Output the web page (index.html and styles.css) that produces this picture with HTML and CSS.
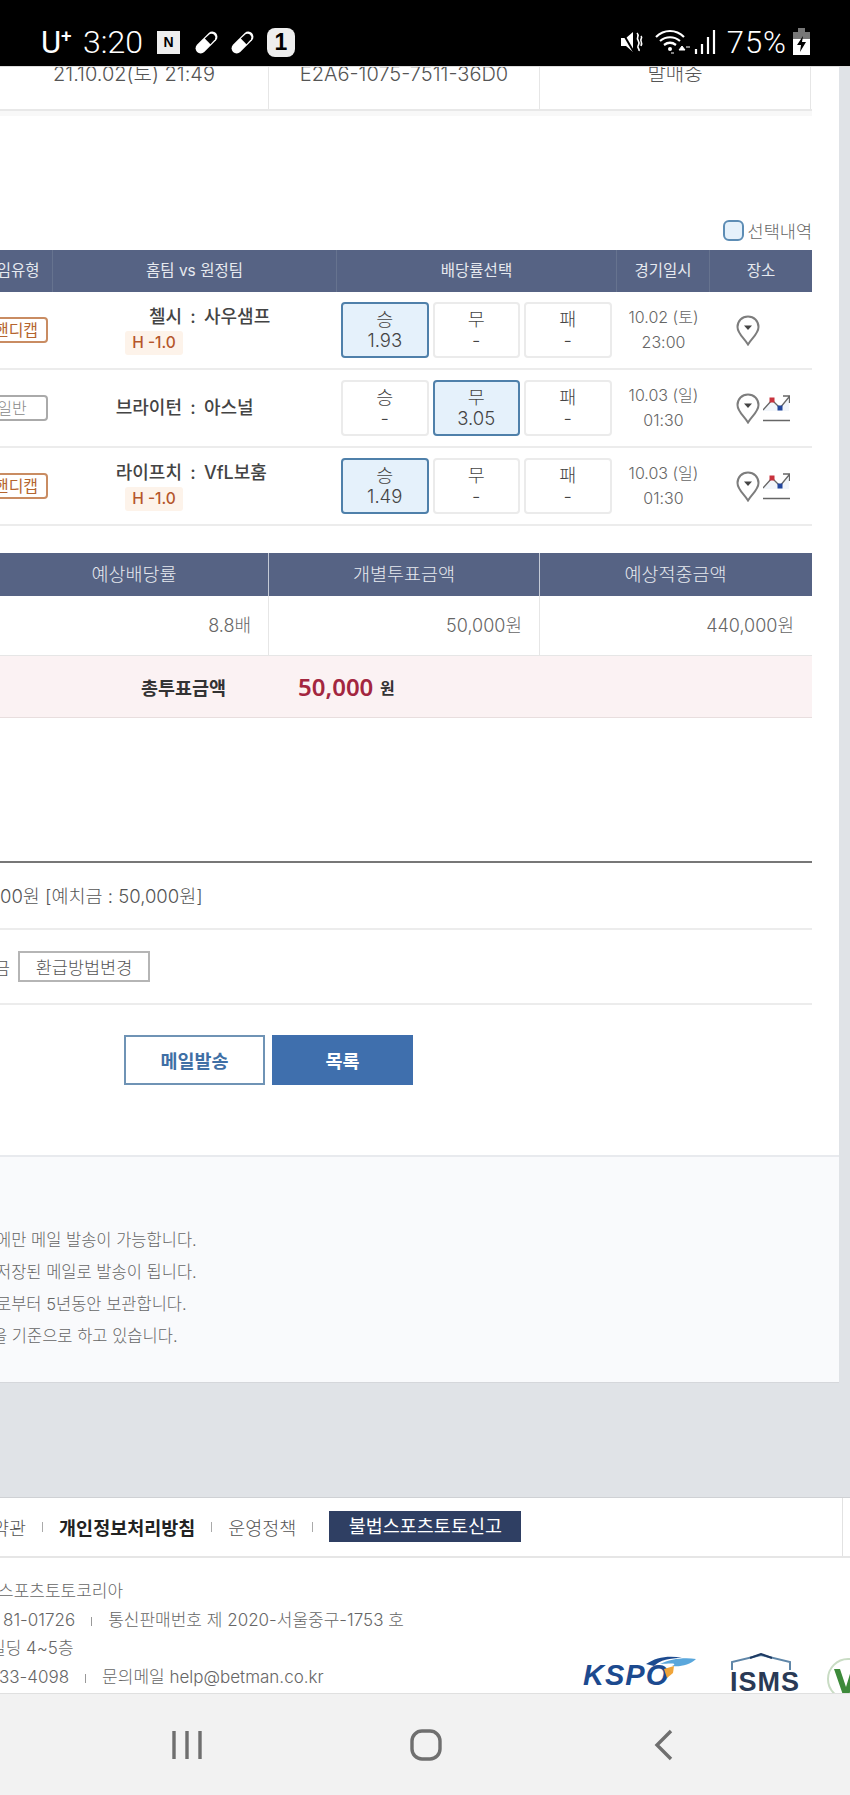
FILE: index.html
```html
<!DOCTYPE html>
<html lang="ko">
<head>
    <meta charset="UTF-8">
    <title>구매내역</title>
    <link rel="stylesheet" href="styles.css">
</head>
<body>
    <svg class="defs" width="0" height="0">
        <symbol id="pin" viewBox="0 0 24 31">
            <path d="M12 1.500C6 1.500 1.500 6 1.500 12c0 6.500 6.500 11 10.500 17.500C16 23 22.500 18.500 22.500 12 22.500 6 18 1.500 12 1.500z" fill="#fff" stroke="#7d7d7d" stroke-width="2"/>
            <path d="M8 10.500h8l-4 4.500z" fill="#444"/>
        </symbol>
        <symbol id="chart" viewBox="0 0 27 28">
            <path d="M0 16L9 6l8 8 9-11v14H0z" fill="#f2f6fb"/>
            <path d="M0 16L9 6l8 8 9-11M20 2h6.500v7" fill="none" stroke="#666" stroke-width="1.300"/>
            <rect x="6.500" y="3.500" width="5" height="5" fill="#c8323c"/>
            <rect x="14.500" y="11.500" width="5" height="5" fill="#23479c"/>
            <path d="M0 26.500h27" stroke="#666" stroke-width="1.500"/>
        </symbol>
        <symbol id="capsule" viewBox="0 0 24 24">
            <path d="M3.500 14L14 3.500a4.600 4.600 0 0 1 6.500 6.500L10 20.500A4.600 4.600 0 0 1 3.500 14z" fill="#fff"/>
            <path d="M10.500 8.500L15 4.500a3.400 3.400 0 0 1 4.500 4.500l-4 4.500z" fill="#000"/>
        </symbol>
    </svg>

    <header class="status-bar">
        <div class="status-left">
            <span class="carrier">U<sup>+</sup></span>
            <span class="clock">3:20</span>
            <span class="n-badge">N</span>
            <svg class="capsule" width="27" height="27"><use href="#capsule"/></svg>
            <svg class="capsule" width="27" height="27"><use href="#capsule"/></svg>
            <span class="one-badge">1</span>
        </div>
        <div class="status-right">
            <svg width="25" height="26" viewBox="0 0 25 26">
                <path d="M1 9h5l7-6v20l-7-6H1z" fill="#fff"/>
                <path d="M1 1l14 24" stroke="#000" stroke-width="2"/>
                <path d="M17 4c3 3-1 4 1 7s1 4 0 6 2 3 1 5M21 7c2 2-1 3 0 5s1 3 0 5" fill="none" stroke="#fff" stroke-width="1.600"/>
            </svg>
            <svg width="36" height="28" viewBox="0 0 36 28">
                <path d="M1 9c8-8 20-8 28 0M5 13c6-5 14-5 20 0M9 17c4-3 8-3 12 0" fill="none" stroke="#fff" stroke-width="2.200"/>
                <circle cx="15" cy="21" r="2" fill="#fff"/>
                <path d="M24 22l3-4 3 4zM31 19h4M16 25h3" stroke="#fff" fill="#fff"/>
            </svg>
            <svg width="22" height="26" viewBox="0 0 22 26">
                <path d="M2 20v5M8 15v10M14 8v17M20 1v24" stroke="#fff" stroke-width="2.200"/>
            </svg>
            <span class="battery-text">75%</span>
            <svg width="17" height="28" viewBox="0 0 17 28">
                <rect x="5" y="0" width="7" height="4" fill="#777"/>
                <rect x="0" y="4" width="17" height="7" fill="#777"/>
                <rect x="0" y="11" width="17" height="16" fill="#fff"/>
                <path d="M10 8L4 17h4l-1 7 6-10H9z" fill="#000"/>
            </svg>
        </div>
    </header>

    <main class="card">
        <div class="top-row">
            <div class="top-cell"><span>21.10.02(토) 21:49</span></div>
            <div class="top-cell"><span>E2A6-1075-7511-36D0</span></div>
            <div class="top-cell"><span>발매중</span></div>
        </div>
        <div class="top-band"></div>

        <div class="legend">
            <span class="legend-box"></span>
            <span>선택내역</span>
        </div>

        <div class="game-table">
            <div class="game-head">
                <div>게임유형</div>
                <div>홈팀 vs 원정팀</div>
                <div>배당률선택</div>
                <div>경기일시</div>
                <div>장소</div>
            </div>

            <div class="game-row">
                <div class="type-cell"><span class="badge badge-hc">핸디캡</span></div>
                <div class="team-cell">
                    <div class="teams"><span class="home">첼시</span><span class="vs">:</span><span class="away">사우샘프</span></div>
                    <span class="hc-tag">H -1.0</span>
                </div>
                <div class="odds-cell">
                    <div class="odd odd-on"><b>승</b><i>1.93</i></div>
                    <div class="odd"><b>무</b><i>-</i></div>
                    <div class="odd"><b>패</b><i>-</i></div>
                </div>
                <div class="date-cell">10.02 (토)<br>23:00</div>
                <div class="place-cell">
                    <svg class="pin"><use href="#pin"/></svg>
                </div>
            </div>

            <div class="game-row">
                <div class="type-cell"><span class="badge badge-plain">일반</span></div>
                <div class="team-cell">
                    <div class="teams"><span class="home">브라이턴</span><span class="vs">:</span><span class="away">아스널</span></div>
                </div>
                <div class="odds-cell">
                    <div class="odd"><b>승</b><i>-</i></div>
                    <div class="odd odd-on"><b>무</b><i>3.05</i></div>
                    <div class="odd"><b>패</b><i>-</i></div>
                </div>
                <div class="date-cell">10.03 (일)<br>01:30</div>
                <div class="place-cell">
                    <svg class="pin"><use href="#pin"/></svg>
                    <svg class="chart"><use href="#chart"/></svg>
                </div>
            </div>

            <div class="game-row">
                <div class="type-cell"><span class="badge badge-hc">핸디캡</span></div>
                <div class="team-cell">
                    <div class="teams"><span class="home">라이프치</span><span class="vs">:</span><span class="away">VfL보훔</span></div>
                    <span class="hc-tag">H -1.0</span>
                </div>
                <div class="odds-cell">
                    <div class="odd odd-on"><b>승</b><i>1.49</i></div>
                    <div class="odd"><b>무</b><i>-</i></div>
                    <div class="odd"><b>패</b><i>-</i></div>
                </div>
                <div class="date-cell">10.03 (일)<br>01:30</div>
                <div class="place-cell">
                    <svg class="pin"><use href="#pin"/></svg>
                    <svg class="chart"><use href="#chart"/></svg>
                </div>
            </div>
        </div>

        <div class="sum-head">
            <div>예상배당률</div>
            <div>개별투표금액</div>
            <div>예상적중금액</div>
        </div>
        <div class="sum-row">
            <div>8.8배</div>
            <div>50,000원</div>
            <div>440,000원</div>
        </div>
        <div class="sum-total">
            <span class="total-label">총투표금액</span>
            <span class="total-num">50,000</span>
            <span class="total-unit">원</span>
        </div>

        <div class="info-row info-first">00원 [예치금 : 50,000원]</div>
        <div class="info-row info-second">
            <span class="info-clip">금</span>
            <button class="refund-btn">환급방법변경</button>
        </div>

        <div class="btn-box">
            <button class="btn btn-line">메일발송</button>
            <button class="btn btn-fill">목록</button>
        </div>

        <div class="notes">
            <p class="note1">에만 메일 발송이 가능합니다.</p>
            <p class="note2">저장된 메일로 발송이 됩니다.</p>
            <p class="note3">로부터 5년동안 보관합니다.</p>
            <p class="note4">을 기준으로 하고 있습니다.</p>
        </div>
    </main>

    <footer class="footer">
        <nav class="foot-nav">
            <a>이용약관</a><i></i>
            <a class="strong">개인정보처리방침</a><i></i>
            <a>운영정책</a><i></i>
            <a class="report">불법스포츠토토신고</a>
        </nav>
        <div class="foot-body">
            <div class="foot-text">
                <p class="line1">스포츠토토코리아</p>
                <p class="line2">81-01726<i></i>통신판매번호 제 2020-서울중구-1753 호</p>
                <p class="line3">빌딩 4~5층</p>
                <p class="line4">33-4098<i></i>문의메일 help@betman.co.kr</p>
            </div>
            <div class="logos">
                <div class="logo-kspo">
                    <span>KSPO</span>
                    <svg width="50" height="24" viewBox="0 0 50 24">
                        <path d="M0 9C10 2 24 0 36 3 24 3 14 5 8 11z" fill="#1c4a8f"/>
                        <path d="M14 9c10-5 24-7 36-5-6 6-16 8-24 7 6-3 0-3-12-2z" fill="#5aa7dc"/>
                        <path d="M18 14l10-3-1 7-6 5z" fill="#f0a53a"/>
                    </svg>
                </div>
                <div class="logo-isms">
                    <svg width="62" height="18" viewBox="0 0 62 18">
                        <path d="M2 17V9L31 2l29 7v8" fill="none" stroke="#5f86a8" stroke-width="2"/>
                        <path d="M20 5l11-4 11 4" fill="none" stroke="#1e3a63" stroke-width="2"/>
                    </svg>
                    <span>ISMS</span>
                </div>
                <svg class="logo-green" width="40" height="44" viewBox="0 0 40 44">
                    <circle cx="22" cy="22" r="20" fill="#fff" stroke="#c9dcc4" stroke-width="2"/>
                    <path d="M8 12l6 0 6 18 6-20 6 0-9 28h-6z" fill="#3d8a3a"/>
                </svg>
            </div>
        </div>
    </footer>

    <div class="bottom-nav">
        <svg width="32" height="30" viewBox="0 0 32 30">
            <path d="M3 1v28M16 1v28M29 1v28" stroke="#6f6f6f" stroke-width="3.400"/>
        </svg>
        <svg class="nav-home" width="32" height="32" viewBox="0 0 32 32">
            <rect x="2" y="2" width="28" height="28" rx="10" fill="none" stroke="#6f6f6f" stroke-width="3.400"/>
        </svg>
        <svg class="nav-back" width="20" height="32" viewBox="0 0 20 32">
            <path d="M17 2L3 16l14 14" fill="none" stroke="#6f6f6f" stroke-width="3.400"/>
        </svg>
    </div>
</body>
</html>
```

FILE: styles.css
```css
*{
    margin:0;
    padding:0;
    box-sizing:border-box;
}
body{
    width:850px;
    height:1795px;
    overflow:hidden;
    background:#e0e3e7;
    font-family:Inter,"Noto Sans CJK KR",sans-serif;
    font-weight:300;
    color:#555;
}
.defs{
    position:absolute;
}
i{
    font-style:normal;
}

/* status bar */
.status-bar{
    position:relative;
    z-index:2;
    height:67px;
    padding:26px 40px 0 41px;
    display:flex;
    justify-content:space-between;
    background:#000;
    color:#fff;
    font-family:Roboto,sans-serif;
    border-bottom:1px solid #ddd;
}
.status-left,.status-right{
    display:flex;
    align-items:center;
    height:32px;
}
.carrier{
    width:42px;
    font-size:31px;
    font-weight:400;
}
.carrier sup{
    font-size:19px;
    font-weight:500;
    line-height:0;
}
.clock{
    width:74px;
    font-size:32px;
    font-weight:300;
}
.n-badge{
    width:23px;
    height:23px;
    margin-right:13px;
    background:#eee;
    color:#000;
    font:bold 14px/23px "Liberation Sans",sans-serif;
    text-align:center;
}
.capsule{
    margin-right:9px;
}
.one-badge{
    width:28px;
    height:29px;
    margin-left:2px;
    background:#eee;
    color:#000;
    border-radius:8px;
    font:bold 23px/29px "Liberation Sans",sans-serif;
    text-align:center;
}
.status-right{
    gap:6px;
}
.status-right svg:nth-child(2){
    margin-left:4px;
}
.status-right svg:nth-child(3){
    margin-left:-3px;
}
.battery-text{
    margin-left:5px;
    font-size:31px;
    font-weight:300;
    letter-spacing:1px;
}

/* white card */
.card{
    width:839px;
    background:#fff;
    overflow:hidden;
}
.top-row,.sum-head,.sum-row{
    display:grid;
    grid-template-columns:269px 271px 271px;
    width:812px;
}
.top-row{
    height:44px;
    border-bottom:2px solid #e8e8e8;
    overflow:hidden;
}
.top-cell{
    border-right:1px solid #e6e6e6;
    text-align:center;
    font-size:20px;
    line-height:20px;
    color:#555;
}
.top-cell span{
    display:block;
    margin-top:-3px;
}
.top-band{
    width:812px;
    height:5px;
    background:#f8f8f8;
}
.legend{
    width:812px;
    height:20px;
    margin:104px 0 10px;
    display:flex;
    justify-content:flex-end;
    align-items:center;
    gap:4px;
    font-size:17.5px;
    color:#666;
}
.legend-box{
    width:21px;
    height:21px;
    background:#e5f1fb;
    border:2px solid #5d8db5;
    border-radius:6px;
}

/* game table */
.game-table{
    width:842px;
    margin-left:-30px;
}
.game-head,.game-row{
    display:grid;
    grid-template-columns:83px 284px 280px 93px 102px;
}
.game-head{
    height:42px;
    background:#566384;
    color:#e6e9ef;
    font-size:15.500px;
    font-weight:400;
    line-height:42px;
    text-align:center;
}
.game-head div{
    border-right:1px solid #66738f;
}
.game-head div:last-child{
    border-right:0;
}
.game-row{
    height:78px;
    border-bottom:2px solid #ececec;
    align-items:center;
}
.type-cell{
    padding-right:5px;
    text-align:right;
}
.badge{
    display:inline-block;
    width:72px;
    height:26px;
    padding-left:8px;
    border-radius:4px;
    background:#fff;
    font-size:16px;
    font-weight:400;
    line-height:23px;
    text-align:center;
}
.badge-hc{
    border:2px solid #c98c62;
    color:#b5652f;
}
.badge-plain{
    padding-left:0;
    border:2px solid #aaa;
    color:#888;
    font-weight:300;
}
.team-cell{
    display:flex;
    flex-direction:column;
}
.teams{
    display:grid;
    grid-template-columns:1fr 22px 1fr;
    font-size:18px;
    font-weight:500;
    line-height:24px;
    color:#444;
    padding-right:4px;
}
.home{
    text-align:right;
}
.vs{
    text-align:center;
}
.hc-tag{
    width:58px;
    height:24px;
    margin:2px 0 0 72px;
    background:#fdf3ea;
    border-radius:3px;
    color:#b5562a;
    font-size:15.500px;
    font-weight:500;
    line-height:24px;
    text-align:center;
}
.odds-cell{
    display:flex;
    gap:4px;
    padding-left:4px;
}
.odd{
    width:87.5px;
    height:56px;
    display:flex;
    flex-direction:column;
    align-items:center;
    justify-content:center;
    border:2px solid #ebebeb;
    border-radius:4px;
    background:#fff;
    font-size:18.500px;
    line-height:21px;
    color:#444;
}
.odd b,.odd i{
    font-weight:300;
    font-style:normal;
}
.odd-on{
    background:#e5f1fb;
    border-color:#4f80aa;
}
.date-cell{
    font-size:16px;
    line-height:25px;
    color:#666;
    text-align:center;
}
.place-cell{
    display:flex;
    align-items:center;
    gap:3px;
    padding-left:26px;
}
.pin{
    width:24px;
    height:31px;
}
.chart{
    width:27px;
    height:28px;
}

/* amount summary */
.sum-head{
    height:43px;
    margin-top:27px;
    background:#566384;
    color:#e6e9ef;
    font-size:18.500px;
    line-height:43px;
    text-align:center;
}
.sum-head div{
    border-right:1px solid #c4cad6;
}
.sum-head div:last-child{
    border-right:0;
}
.sum-row{
    height:60px;
    border-bottom:1px solid #e6e6e6;
    font-size:18px;
    line-height:59px;
    text-align:right;
    color:#666;
}
.sum-row div{
    padding-right:17px;
    border-right:1px solid #e6e6e6;
}
.sum-row div:last-child{
    border-right:0;
}
.sum-total{
    width:812px;
    height:62px;
    display:flex;
    align-items:center;
    padding-left:141px;
    background:#fbf2f3;
    border-bottom:1px solid #e8dede;
}
.total-label{
    width:157px;
    font-size:18.500px;
    font-weight:700;
    color:#333;
}
.total-num{
    width:82px;
    font-family:"Noto Sans",sans-serif;
    font-size:24px;
    font-weight:600;
    color:#a3263f;
}
.total-unit{
    font-size:16px;
    font-weight:700;
    color:#333;
}

/* payment info */
.info-row{
    width:812px;
    font-size:18.500px;
    color:#555;
    border-bottom:2px solid #ececec;
}
.info-first{
    height:69px;
    margin-top:143px;
    border-top:2px solid #777;
    line-height:66px;
}
.info-second{
    height:75px;
    display:flex;
    align-items:center;
}
.info-clip{
    width:18px;
    margin-left:-7px;
    margin-right:7px;
}
.refund-btn{
    width:132px;
    height:31px;
    background:#fff;
    border:2px solid #b5b5b5;
    font:300 17.5px "Noto Sans CJK KR",sans-serif;
    color:#555;
}
.btn-box{
    display:flex;
    gap:7px;
    margin:30px 0 70px 124px;
}
.btn{
    width:141px;
    height:50px;
    font:700 18.500px "Noto Sans CJK KR",sans-serif;
}
.btn-line{
    background:#fff;
    border:2px solid #6f93b5;
    color:#3f6fa5;
}
.btn-fill{
    background:#3f6fad;
    border:0;
    color:#fff;
}

/* notes */
.notes{
    height:228px;
    padding-top:67px;
    background:#f9fafc;
    border-top:2px solid #e8eaee;
    border-bottom:1px solid #d5d7db;
    font-size:16.500px;
    line-height:32px;
    color:#666;
    white-space:nowrap;
}
.note1{
    margin-left:-4px;
}
.note2{
    margin-left:-4px;
}
.note3{
    margin-left:-4px;
}
.note4{
    margin-left:-8px;
}

/* footer */
.footer{
    height:196px;
    margin-top:114px;
    background:#fff;
    border-top:1px solid #cfd1d4;
    overflow:hidden;
}
.foot-nav{
    height:58px;
    width:885px;
    display:flex;
    align-items:center;
    gap:16px;
    margin-left:-42px;
    padding-bottom:1px;
    border-right:1px solid #e2e2e2;
    font-size:18.500px;
    color:#555;
}
.foot-nav i{
    width:1px;
    height:10px;
    background:#aaa;
}
.strong{
    font-weight:700;
    color:#222;
}
.report{
    width:192px;
    height:31px;
    background:#2f3f63;
    color:#fff;
    font-weight:400;
    line-height:30px;
    text-align:center;
}
.foot-body{
    display:flex;
    border-top:2px solid #e6e6e6;
    height:137px;
}
.foot-text{
    flex:none;
    width:583px;
    padding-top:19px;
    font-size:17px;
    line-height:28.5px;
    color:#666;
    white-space:nowrap;
}
.foot-text i{
    display:inline-block;
    width:1px;
    height:9px;
    margin:0 16px;
    background:#999;
}
.line1{
    margin-left:-2px;
}
.line2{
    margin-left:3px;
}
.line3{
    margin-left:-10px;
}
.line4{
    margin-left:-1px;
}
.logos{
    flex:none;
    display:flex;
    align-items:flex-end;
    height:135px;
}
.logo-kspo{
    position:relative;
    width:147px;
    height:36px;
    font:italic bold 29px/36px "Liberation Sans",sans-serif;
    letter-spacing:1px;
    color:#1c4a8f;
}
.logo-kspo svg{
    position:absolute;
    left:63px;
    top:-2px;
}
.logo-isms{
    width:96px;
    display:flex;
    flex-direction:column;
    font:bold 27px/22px "Liberation Sans",sans-serif;
    letter-spacing:1px;
    color:#2a3a55;
}
.logo-green{
    margin-bottom:-8px;
}

/* android nav */
.bottom-nav{
    height:102px;
    display:flex;
    align-items:center;
    padding-left:171px;
    background:#f2f2f2;
    border-top:1px solid #e0e0e0;
}
.nav-home{
    margin-left:207px;
}
.nav-back{
    margin-left:212px;
}
```
